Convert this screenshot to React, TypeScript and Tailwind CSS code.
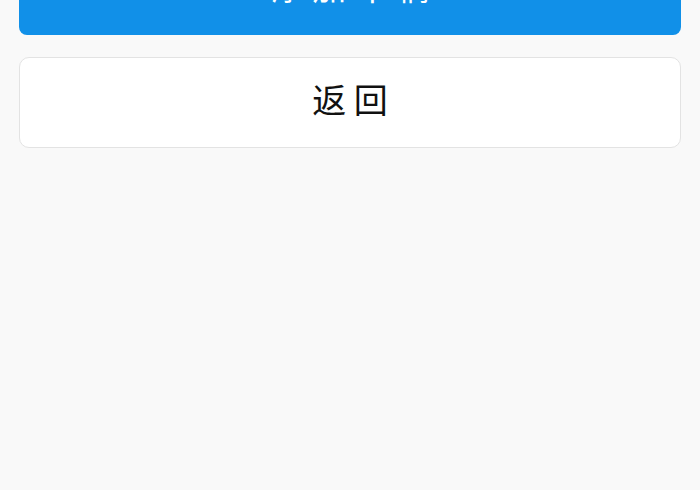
export default function App() {
  return (
    <div
      className="min-h-[490px] bg-[#f9f9f9] overflow-hidden"
      style={{ fontFamily: '"Noto Sans CJK SC", "Noto Sans", sans-serif' }}
    >
      <div className="px-[19px] mt-[-56px] flex flex-col gap-[22px]">
        {/* Primary action (scrolled mostly out of view) */}
        <button className="h-[91px] w-full pb-[8px] rounded-[8px] bg-[#1190e8] text-white text-[34px] leading-none">
          添 加 车 辆
        </button>

        {/* Back */}
        <button className="h-[91px] w-full pb-[8px] rounded-[10px] bg-white border border-[#e3e3e3] text-[#111] text-[34px] leading-none">
          返 回
        </button>
      </div>
    </div>
  );
}
